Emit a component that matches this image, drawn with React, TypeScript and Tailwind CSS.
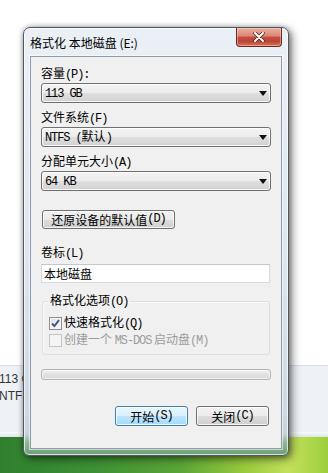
import type { ReactNode } from "react";

const cjk = "font-['Noto_Sans_CJK_SC',sans-serif]";

// half-width latin runs, close to the SimSun look of the dialog
function M({ children }: { children: ReactNode }) {
  return <span className="font-['Liberation_Mono',monospace] text-[12px] tracking-[-1.1px]">{children}</span>;
}

function Label({ children, className = "" }: { children: ReactNode; className?: string }) {
  return <div className={`h-[15px] text-[12px] leading-[15px] text-black ${className}`}>{children}</div>;
}

function Combo({ children }: { children: ReactNode }) {
  return (
    <div className="mt-[3px] flex h-[20px] items-center justify-between rounded-[3px] border border-[#707070] bg-[linear-gradient(to_bottom,#f4f4f4_0%,#ececec_50%,#dfdfdf_51%,#d2d2d2_100%)] pl-[3px] pr-[3px] shadow-[inset_0_0_0_1px_rgba(255,255,255,0.8)]">
      <span className="text-[12px] leading-[15px] text-black">{children}</span>
      <svg width="8" height="5" viewBox="0 0 8 5" aria-hidden>
        <path d="M0 0h8L4 5z" fill="#111" />
      </svg>
    </div>
  );
}

function Button({ children, primary, className = "" }: { children: ReactNode; primary?: boolean; className?: string }) {
  const skin = primary
    ? "border-[#3c7fb1] bg-[linear-gradient(to_bottom,#eaf6fd_0%,#d9f0fc_50%,#bee6fd_51%,#a7d9f5_100%)]"
    : "border-[#707070] bg-[linear-gradient(to_bottom,#f2f2f2_0%,#ebebeb_50%,#dddddd_51%,#cfcfcf_100%)]";
  return (
    <div
      className={`flex items-center justify-center rounded-[3px] border text-[12px] leading-[15px] text-black shadow-[inset_0_0_0_1px_rgba(255,255,255,0.75)] ${skin} ${className}`}
    >
      {children}
    </div>
  );
}

function Check({ checked, disabled, children }: { checked?: boolean; disabled?: boolean; children: ReactNode }) {
  return (
    <div className="ml-[1px] flex h-[16px] items-center gap-[2px]">
      <span
        className={`flex h-[13px] w-[13px] items-center justify-center border ${
          disabled
            ? "border-[#c4c4c4] bg-[#f4f4f4]"
            : "border-[#8e8f8f] bg-[linear-gradient(135deg,#dcdcdc_0%,#f0f0f0_50%,#fbfbfb_100%)] shadow-[inset_0_0_0_1px_#f4f4f4]"
        }`}
      >
        {checked && (
          <svg width="9" height="9" viewBox="0 0 9 9" aria-hidden>
            <path d="M1 4.5l2.4 2.6L8 1.2" fill="none" stroke="#3a5492" strokeWidth="1.9" />
          </svg>
        )}
      </span>
      <span className={`text-[12px] leading-[15px] ${disabled ? "text-[#9c9c9c]" : "text-black"}`}>{children}</span>
    </div>
  );
}

function FormatDialog() {
  return (
    <div className="absolute left-[23px] top-[27px] flex h-[429px] w-[266px] flex-col rounded-t-[7px] rounded-b-[6px] border border-[#4f5863] bg-[linear-gradient(to_bottom,#eaf0f6_0%,#dde6ef_55%,#cdd9e4_90%,#c6d6dc_95%,#8fb996_97%,#6d9f77_100%)] px-[6px] pb-[6px] shadow-[inset_0_0_0_1px_rgba(255,255,255,0.7),3px_3px_9px_rgba(0,0,0,0.5),0_0_5px_rgba(0,0,0,0.3)]">
      <div className="flex h-[28px] shrink-0 items-start justify-between">
        <span className="pt-[7px] text-[12px] leading-[15px] text-black">格式化 本地磁盘 (E:)</span>
        <div className="flex h-[19px] w-[46px] items-center justify-center rounded-b-[4px] border border-t-0 border-[#6b2c24] bg-[linear-gradient(to_bottom,#eab0a2_0%,#d98576_45%,#c54d3d_50%,#bd4536_75%,#d8765c_100%)] shadow-[inset_0_0_0_1px_rgba(255,210,200,0.45)]">
          <svg width="12" height="10" viewBox="0 0 12 10" aria-hidden>
            <path d="M2 1l8 8M10 1L2 9" stroke="#5a211b" strokeWidth="3.4" strokeLinecap="round" />
            <path d="M2 1l8 8M10 1L2 9" stroke="#fff" strokeWidth="2" strokeLinecap="round" />
          </svg>
        </div>
      </div>

      <div className="flex flex-1 flex-col border border-[#8f9ba8] bg-[#f0f0f0] px-[10px] pt-[8px] shadow-[0_0_0_1px_rgba(255,255,255,0.55)]">
        <Label>
          容量<M>(P):</M>
        </Label>
        <Combo>
          <M>113 GB</M>
        </Combo>

        <Label className="mt-[6px]">
          文件系统<M>(F)</M>
        </Label>
        <Combo>
          <M>NTFS (</M>默认<M>)</M>
        </Combo>

        <Label className="mt-[6px]">
          分配单元大小<M>(A)</M>
        </Label>
        <Combo>
          <M>64 KB</M>
        </Combo>

        <Button className="ml-[1px] mt-[19px] h-[19px] w-[133px]">
          还原设备的默认值<M>(D)</M>
        </Button>

        <Label className="mt-[15px]">
          卷标<M>(L)</M>
        </Label>
        <div className="mr-[1px] mt-[5px] flex h-[19px] items-center border border-[#d6dade] border-t-[#c3c7cd] bg-white pl-[2px] text-[12px] leading-[15px] text-black">
          本地磁盘
        </div>

        <fieldset className="mx-[1px] mt-[9px] rounded-[3px] border border-[#d5dfe5] pb-[6px] pl-[5px] shadow-[inset_1px_1px_0_#fafafa]">
          <legend className="px-[2px] text-[12px] leading-[15px] text-black">
            格式化选项<M>(O)</M>
          </legend>
          <div className="mt-[5px] flex flex-col gap-[1px]">
            <Check checked>
              快速格式化<M>(Q)</M>
            </Check>
            <Check disabled>
              创建一个 <M>MS-DOS</M> 启动盘<M>(M)</M>
            </Check>
          </div>
        </fieldset>

        <div className="mt-[14px] h-[11px] rounded-[3px] border border-[#b4b4b4] bg-[linear-gradient(to_bottom,#f2f2f2_0%,#e2e2e2_45%,#d8d8d8_100%)] shadow-[inset_0_0_0_1px_rgba(255,255,255,0.6)]" />

        <div className="mr-[2px] mt-[26px] flex justify-end gap-[8px]">
          <Button primary className="h-[20px] w-[73px]">
            开始<M>(S)</M>
          </Button>
          <Button className="h-[20px] w-[73px]">
            关闭<M>(C)</M>
          </Button>
        </div>
      </div>
    </div>
  );
}

export default function App() {
  return (
    <div className={`relative flex h-[473px] w-[328px] flex-col overflow-hidden bg-white ${cjk}`}>
      <div className="h-[365px] shrink-0 bg-white" />
      <div className="h-[67px] shrink-0 border-t border-[#d9dee4] bg-[#eef1f6] pt-[5px] font-['Liberation_Sans',sans-serif] text-[12px] leading-[17px] text-[#333]">
        <div className="-ml-[1px]">113 GB</div>
        <div className="-ml-[1px]">NTFS</div>
      </div>
      <div className="h-[5px] shrink-0 bg-[linear-gradient(to_bottom,#f8fafb,#dfe6ea)]" />
      <div className="flex-1 bg-[linear-gradient(90deg,#2f7f2f_0%,#3f9135_30%,#5aa537_55%,#9acb3e_75%,#c4e05c_88%,#9ccf3c_100%)]" />
      <FormatDialog />
    </div>
  );
}
